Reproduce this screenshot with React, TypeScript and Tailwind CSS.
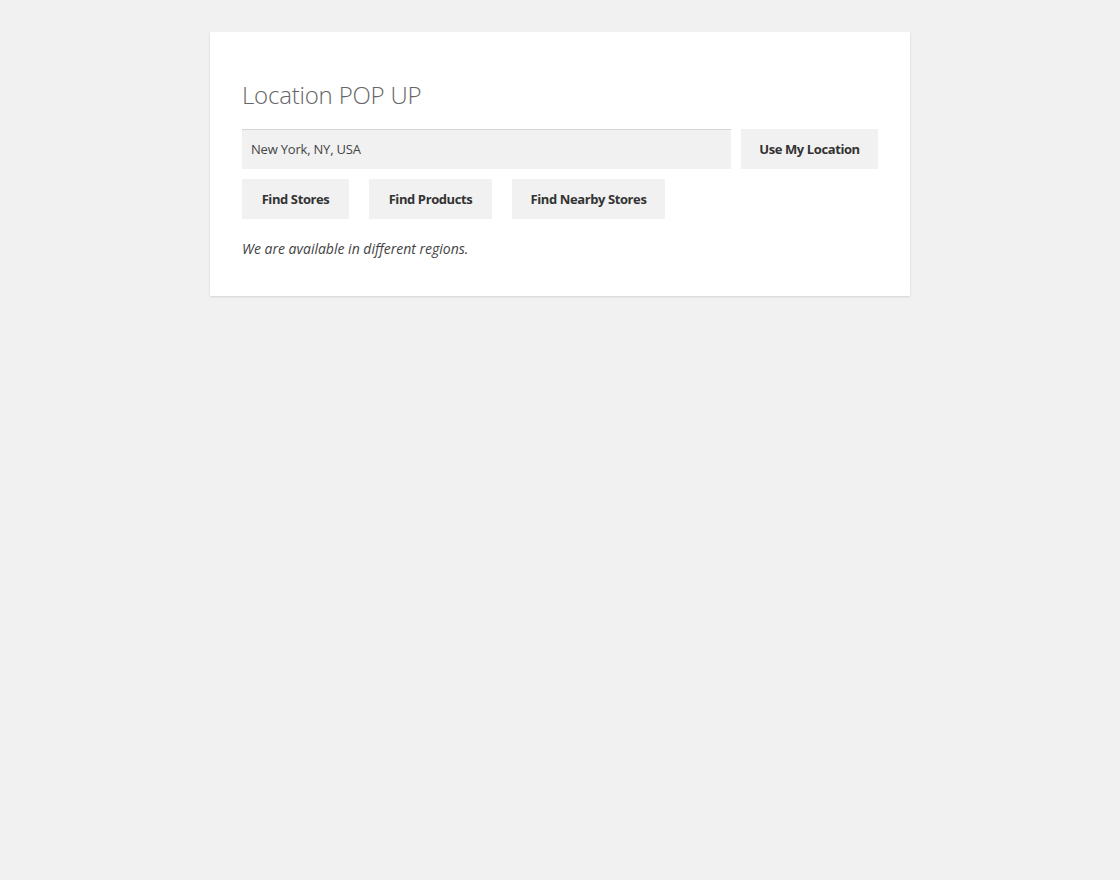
export default function App() {
  return (
    <div className="min-h-[880px] bg-[#f1f1f1] pt-8 font-['Open_Sans',sans-serif]">
      <div className="mx-auto w-[700px] bg-white px-8 pt-[45px] pb-[35px] shadow-[0_1px_2px_rgba(0,0,0,0.12)]">
        <h2 className="text-[24px] leading-[36px] font-light text-[#666] tracking-[-0.2px]">
          Location POP UP
        </h2>

        <div className="mt-4 flex gap-[10px]">
          <input
            defaultValue="New York, NY, USA"
            className="h-10 flex-1 border-t border-[#d6d6d6] bg-[#f1f1f1] px-[9px] pb-[2px] text-[13px] text-[#444] tracking-[-0.2px] outline-none"
          />
          <button className="h-10 w-[137px] bg-[#f1f1f1] pt-[2px] text-[13px] font-bold text-[#333] tracking-[-0.4px]">
            Use My Location
          </button>
        </div>

        <div className="mt-[10px] flex gap-5">
          <button className="h-10 w-[107px] bg-[#f1f1f1] pt-[2px] text-[13px] font-bold text-[#333] tracking-[-0.4px]">
            Find Stores
          </button>
          <button className="h-10 w-[123px] bg-[#f1f1f1] pt-[2px] text-[13px] font-bold text-[#333] tracking-[-0.4px]">
            Find Products
          </button>
          <button className="h-10 w-[153px] bg-[#f1f1f1] pt-[2px] text-[13px] font-bold text-[#333] tracking-[-0.4px]">
            Find Nearby Stores
          </button>
        </div>

        <p className="mt-[18px] text-[14px] leading-6 italic text-[#444]">
          We are available in different regions.
        </p>
      </div>
    </div>
  );
}
